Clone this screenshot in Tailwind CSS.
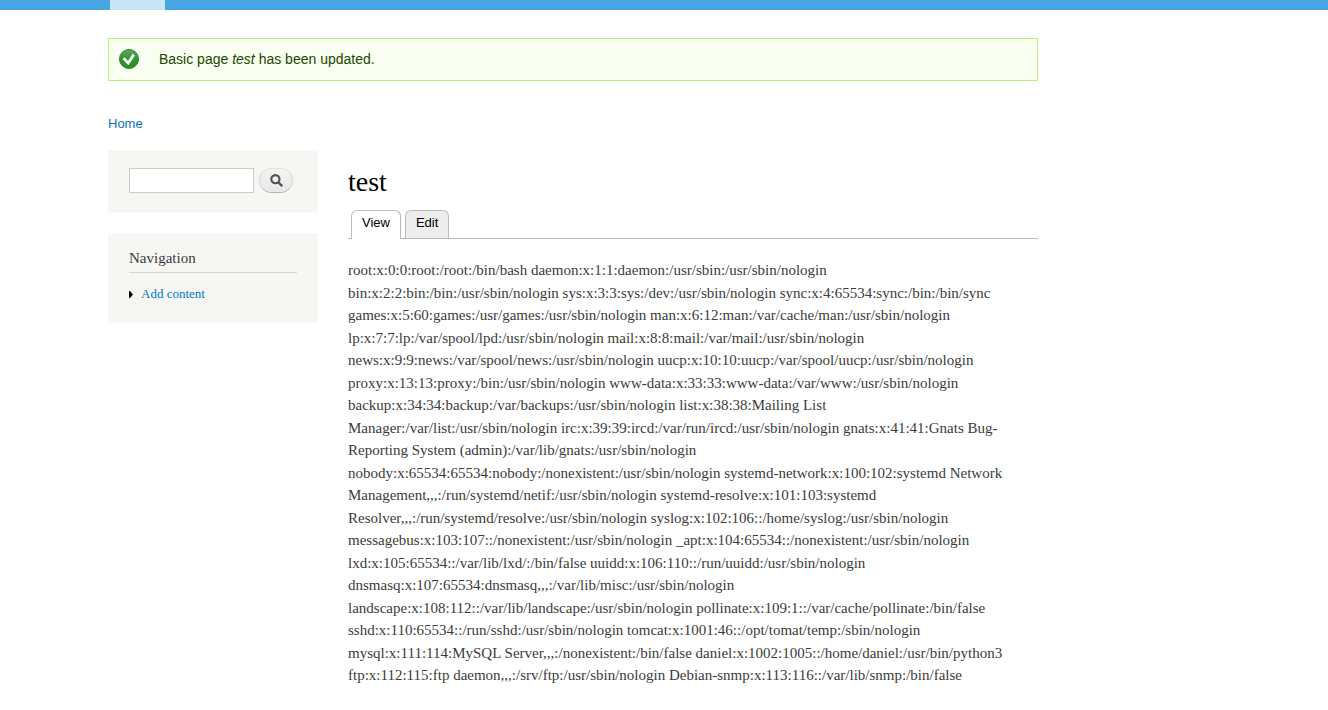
<!DOCTYPE html>
<html lang="en">
<head>
<meta charset="utf-8">
<meta name="viewport" content="width=device-width, initial-scale=1">
<title>test</title>
<script src="https://cdn.jsdelivr.net/npm/@tailwindcss/browser@4"></script>
</head>
<body class="bg-white font-['Liberation_Serif',serif] text-[15px] leading-normal text-[#3b3b3b]">
<header class="h-[10px] bg-[#46a5e2] pl-[110px]">
  <div class="h-full w-[55px] bg-[#c9e4f6]"></div>
</header>
<div class="ml-[108px] mr-4 max-w-[930px]">
  <div role="status" class="mt-7 flex items-start border border-[#be7] bg-[#f8fff0] py-[10px] pl-[10px] font-['Liberation_Sans',sans-serif] text-sm leading-[21px] text-[#234600]">
    <svg class="mr-5 h-5 w-5 shrink-0" viewBox="0 0 20 20" aria-hidden="true">
      <defs><linearGradient id="ok" x1="0" y1="0" x2="0" y2="1"><stop offset="0" stop-color="#57ad55"/><stop offset=".5" stop-color="#2f952e"/><stop offset="1" stop-color="#219020"/></linearGradient></defs>
      <circle cx="10" cy="10" r="9.5" fill="url(#ok)" stroke="#3d7d3b" stroke-width="1"/>
      <path d="M4.6 9.2 9.2 14 14.8 5.6" fill="none" stroke="#fff" stroke-width="2.8"/>
    </svg>
    <p>Basic page <em>test</em> has been updated.</p>
  </div>
  <nav aria-label="Breadcrumb" class="mt-8 font-['Liberation_Sans',sans-serif] text-[13px] leading-[22px]">
    <a href="#" class="text-[#0f70b7]">Home</a>
  </nav>
  <div class="mt-[15px] flex items-start gap-[30px]">
    <aside class="flex w-[210px] shrink-0 flex-col gap-5">
      <form class="flex items-start gap-[5px] border border-[#f9f9f9] bg-[#f6f6f2] px-5 pt-[17px] pb-[19px]">
        <input type="search" aria-label="Search" class="h-[25px] w-[125px] border border-[#ccc] bg-white px-1 text-sm">
        <button type="button" aria-label="Search" class="flex h-[25px] w-[34px] items-center justify-center rounded-full border border-[#e4e4e4] border-x-[#d2d2d2] border-b-[#b4b4b4] bg-linear-to-b from-[#f3f3f3] to-[#e8e8e8]">
          <svg class="h-[13px] w-[13px]" viewBox="0 0 13 13" fill="none" stroke="#505050" aria-hidden="true"><circle cx="5.4" cy="5.2" r="4.1" stroke-width="2.1"/><path d="m8.2 8.2 4 4" stroke-width="2.3"/></svg>
        </button>
      </form>
      <nav aria-labelledby="nav-title" class="border border-[#f9f9f9] bg-[#f6f6f2] px-5 pt-[13px] pb-[18px]">
        <h2 id="nav-title" class="border-b border-[#d6d6d6] pb-[3px] leading-[22px]">Navigation</h2>
        <ul class="mt-[11px]">
          <li class="flex items-center gap-2 text-[13px] leading-5">
            <svg class="h-[7px] w-[4px]" viewBox="0 0 4 7" aria-hidden="true"><path d="M0 0h1l3 3.5L1 7H0z"/></svg>
            <a href="#" class="text-[#027ac6]">Add content</a>
          </li>
        </ul>
      </nav>
    </aside>
    <main class="min-w-0 flex-1 pt-[11px]">
      <h1 class="text-[28px] leading-[42px] text-black">test</h1>
      <nav aria-label="Page tabs" class="mt-[7px] flex gap-1 border-b border-[#bbb] pl-[3px] font-['Liberation_Sans',sans-serif] text-[13px] leading-6 text-black">
        <a href="#" aria-current="page" class="-mb-px rounded-t-md border border-b-0 border-[#bbb] bg-white px-[10px] pb-1">View</a>
        <a href="#" class="rounded-t-md border border-b-0 border-[#bbb] bg-[#ededed] px-[10px]">Edit</a>
      </nav>
      <p class="mt-5">root:x:0:0:root:/root:/bin/bash daemon:x:1:1:daemon:/usr/sbin:/usr/sbin/nologin bin:x:2:2:bin:/bin:/usr/sbin/nologin sys:x:3:3:sys:/dev:/usr/sbin/nologin sync:x:4:65534:sync:/bin:/bin/sync games:x:5:60:games:/usr/games:/usr/sbin/nologin man:x:6:12:man:/var/cache/man:/usr/sbin/nologin lp:x:7:7:lp:/var/spool/lpd:/usr/sbin/nologin mail:x:8:8:mail:/var/mail:/usr/sbin/nologin news:x:9:9:news:/var/spool/news:/usr/sbin/nologin uucp:x:10:10:uucp:/var/spool/uucp:/usr/sbin/nologin proxy:x:13:13:proxy:/bin:/usr/sbin/nologin www-data:x:33:33:www-data:/var/www:/usr/sbin/nologin backup:x:34:34:backup:/var/backups:/usr/sbin/nologin list:x:38:38:Mailing List Manager:/var/list:/usr/sbin/nologin irc:x:39:39:ircd:/var/run/ircd:/usr/sbin/nologin gnats:x:41:41:Gnats Bug-Reporting System (admin):/var/lib/gnats:/usr/sbin/nologin nobody:x:65534:65534:nobody:/nonexistent:/usr/sbin/nologin systemd-network:x:100:102:systemd Network Management,,,:/run/systemd/netif:/usr/sbin/nologin systemd-resolve:x:101:103:systemd Resolver,,,:/run/systemd/resolve:/usr/sbin/nologin syslog:x:102:106::/home/syslog:/usr/sbin/nologin messagebus:x:103:107::/nonexistent:/usr/sbin/nologin _apt:x:104:65534::/nonexistent:/usr/sbin/nologin lxd:x:105:65534::/var/lib/lxd/:/bin/false uuidd:x:106:110::/run/uuidd:/usr/sbin/nologin dnsmasq:x:107:65534:dnsmasq,,,:/var/lib/misc:/usr/sbin/nologin landscape:x:108:112::/var/lib/landscape:/usr/sbin/nologin pollinate:x:109:1::/var/cache/pollinate:/bin/false sshd:x:110:65534::/run/sshd:/usr/sbin/nologin tomcat:x:1001:46::/opt/tomat/temp:/sbin/nologin mysql:x:111:114:MySQL Server,,,:/nonexistent:/bin/false daniel:x:1002:1005::/home/daniel:/usr/bin/python3 ftp:x:112:115:ftp daemon,,,:/srv/ftp:/usr/sbin/nologin Debian-snmp:x:113:116::/var/lib/snmp:/bin/false</p>
    </main>
  </div>
</div>
</body>
</html>
